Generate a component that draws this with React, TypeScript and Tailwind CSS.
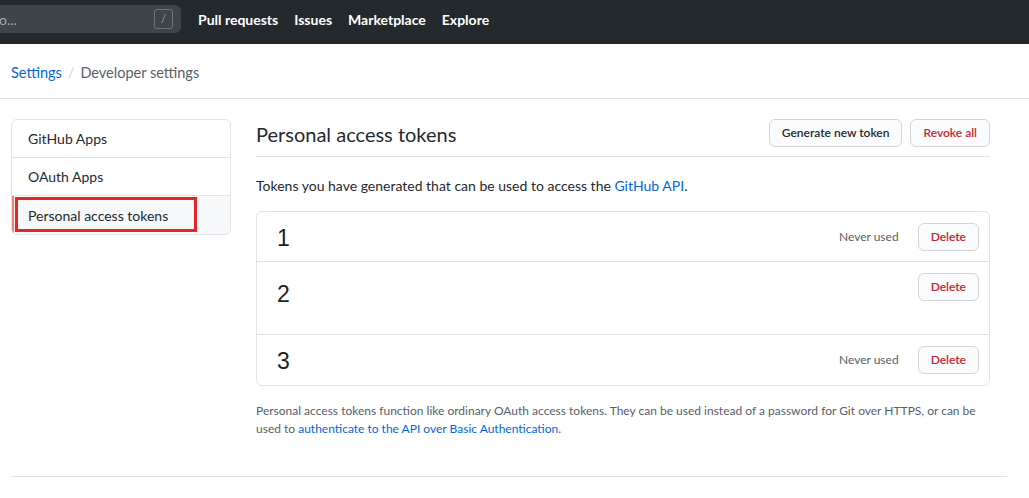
const navItems = ["Pull requests", "Issues", "Marketplace", "Explore"];

const menu = [
  { label: "GitHub Apps", selected: false },
  { label: "OAuth Apps", selected: false },
  { label: "Personal access tokens", selected: true },
];

const tokens = [
  { id: "1", used: true, tall: false, shift: "mt-0" },
  { id: "2", used: false, tall: true, shift: "mt-[6px]" },
  { id: "3", used: true, tall: false, shift: "mt-0" },
];

const font = { fontFamily: "Lato, 'Liberation Sans', sans-serif" };

const Header = () => (
  <header className="flex h-[44px] items-center bg-[#24292e] pb-[6px]">
    <div className="flex h-[28px] w-[181px] items-center justify-between rounded-r-md bg-[#3f4448] pr-[8px]">
      <span className="-ml-[1px] text-[14px] text-[#a0a6ad]">o...</span>
      <span className="flex h-[20px] w-[19px] items-center justify-center rounded-[3px] border border-[#6a737d] text-[11px] text-[#959da5]">
        /
      </span>
    </div>
    <nav className="ml-[17px] flex items-center gap-[16px]">
      {navItems.map((item) => (
        <a key={item} className="text-[14px] font-bold text-white">
          {item}
        </a>
      ))}
    </nav>
  </header>
);

const Breadcrumb = () => (
  <div className="flex h-[55px] items-center border-b border-[#e1e4e8] pt-[3px] pl-[11px] text-[14.5px]">
    <a className="text-[#0366d6]">Settings</a>
    <span className="mx-[6px] text-[#d1d5da]">/</span>
    <span className="text-[#586069]">Developer settings</span>
  </div>
);

const Sidebar = () => (
  <nav className="mt-[1px] w-[220px] shrink-0 self-start overflow-hidden rounded-md border border-[#e1e4e8]">
    {menu.map((m, i) => (
      <div
        key={m.label}
        className={`relative flex h-[38px] items-center text-[14px] text-[#24292e] ${
          i < menu.length - 1 ? "border-b border-[#e1e4e8]" : ""
        } ${m.selected ? "border-l-2 border-l-[#f9826c] bg-[#f6f8fa] pl-[14px]" : "pl-[16px]"}`}
      >
        {m.label}
        {m.selected && (
          <div className="absolute top-[1px] left-[1px] h-[35px] w-[182px] border-[3px] border-[#e3262a]" />
        )}
      </div>
    ))}
  </nav>
);

const Button = ({ children, danger }: { children: React.ReactNode; danger?: boolean }) => (
  <button
    className={`flex h-[28px] items-center rounded-md border border-[#d1d5da] bg-[#fafbfc] px-[12px] text-[12px] font-semibold ${
      danger ? "text-[#cb2431]" : "text-[#24292e]"
    }`}
  >
    {children}
  </button>
);

const TokenRow = ({
  id,
  used,
  tall,
  shift,
  last,
}: {
  id: string;
  used: boolean;
  tall: boolean;
  shift: string;
  last: boolean;
}) => (
  <div
    className={`flex items-start justify-between pt-[11px] pr-[10px] pl-[20px] ${
      tall ? "h-[73px]" : "h-[50px]"
    } ${last ? "" : "border-b border-[#e1e4e8]"}`}
  >
    <span className={`font-['Liberation_Sans',sans-serif] text-[23px] leading-[30px] text-[#1b1f23] ${shift}`}>
      {id}
    </span>
    <div className="flex items-center gap-[19px]">
      {used && <span className="text-[12px] text-[#586069]">Never used</span>}
      <Button danger>Delete</Button>
    </div>
  </div>
);

export default function App() {
  return (
    <div className="min-h-screen bg-white" style={font}>
      <Header />
      <Breadcrumb />
      <div className="flex gap-[25px] pt-[19px] pl-[11px]">
        <Sidebar />
        <main className="w-[734px]">
          <div className="flex h-[39px] items-start justify-between border-b border-[#e1e4e8]">
            <h2 className="mt-[1px] text-[20px] leading-[30px] text-[#24292e]">Personal access tokens</h2>
            <div className="mt-[1px] flex gap-[8px]">
              <Button>Generate new token</Button>
              <Button danger>Revoke all</Button>
            </div>
          </div>
          <p className="mt-[18px] text-[14px] leading-[21px] text-[#24292e]">
            Tokens you have generated that can be used to access the{" "}
            <a className="text-[#0366d6]">GitHub API</a>.
          </p>
          <div className="mt-[15px] rounded-md border border-[#e1e4e8]">
            {tokens.map((t, i) => (
              <TokenRow key={t.id} {...t} last={i === tokens.length - 1} />
            ))}
          </div>
          <p className="mt-[16px] text-[12px] leading-[18px] text-[#586069]">
            <span className="whitespace-nowrap">
              Personal access tokens function like ordinary OAuth access tokens. They can be used instead of a
              password for Git over HTTPS, or can be
            </span>
            <br />
            used to <a className="text-[#0366d6]">authenticate to the API over Basic Authentication</a>.
          </p>
        </main>
      </div>
      <div className="mt-[38px] ml-[11px] w-[996px] border-t border-[#e1e4e8]" />
    </div>
  );
}
